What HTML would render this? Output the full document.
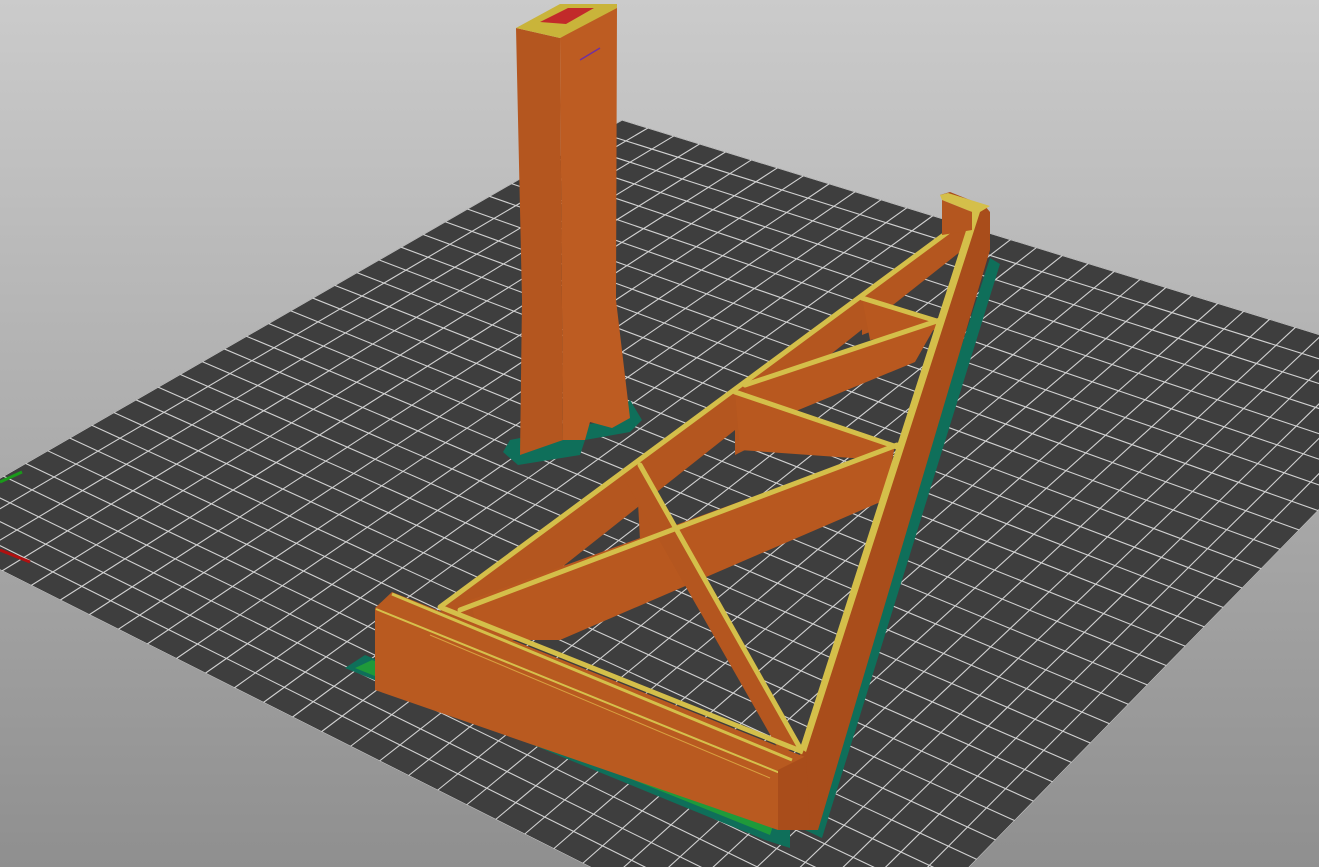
<!DOCTYPE html>
<html><head><meta charset="utf-8"><style>
html,body{margin:0;padding:0;width:1319px;height:867px;overflow:hidden;background:linear-gradient(#cbcbcb,#8f8f8f);}
svg{display:block}
</style></head><body>
<svg id="s" width="1319" height="867" viewBox="0 0 1319 867" xmlns="http://www.w3.org/2000/svg">
<defs><clipPath id="pc"><polygon points="622,120 1451,375 844,995 -85,527"/></clipPath></defs>
<polygon points="622,120 1451,375 844,995 -85,527" fill="#3e3e3e"/>
<g id="grid" clip-path="url(#pc)" stroke="#d2d2d2" stroke-width="1.1"></g>
<line x1="0" y1="482" x2="22" y2="472" stroke="#1a9a1a" stroke-width="3"/>
<line x1="0" y1="550" x2="30" y2="562" stroke="#b01010" stroke-width="3"/>
<polygon points="503,452 510,440 610,420 630,400 642,420 630,432 585,440 580,455 518,465" fill="#0f6f5a"/>
<polygon points="516,28 560,38 563,440 520,455 522,300" fill="#b4561f"/>
<polygon points="560,38 617,5 616,300 630,418 612,428 590,422 585,440 563,440" fill="#bd5c22"/>
<polygon points="516,28 560,4 617,4 617,8 560,38" fill="#c9b43a"/>
<polygon points="540,22 568,8 594,8 566,24" fill="#c22a2a"/>
<line x1="580" y1="60" x2="600" y2="48" stroke="#7030a0" stroke-width="1.5"/>
<polygon points="345,668 365,655 790,830 790,848 765,840" fill="#0f6f5a"/>
<polygon points="355,668 372,660 775,820 770,835" fill="#1f9a3a"/>
<polygon points="805,830 990,258 1000,264 822,838" fill="#0f6f5a"/>
<polygon points="440,610 975,212 975,240 470,640" fill="#b4561f"/>
<polygon points="636,465 650,470 660,535 640,540" fill="#b4561f"/>
<polygon points="735,390 745,395 745,450 735,455" fill="#b4561f"/>
<polygon points="862,298 872,298 875,330 862,335" fill="#b4561f"/>
<polygon points="470,600 895,445 885,500 560,640 480,640" fill="#b8581f"/>
<polygon points="745,385 940,318 915,362 750,430" fill="#b8581f"/>
<polygon points="735,392 895,447 880,460 740,450" fill="#b8581f"/>
<polygon points="862,298 940,322 935,330 870,340" fill="#b8581f"/>
<polygon points="640,465 800,748 780,752 625,480" fill="#b4561f"/>
<g stroke="#d4bf4a" stroke-width="5" fill="none" stroke-linecap="round">
<line x1="440" y1="607" x2="975" y2="212"/>
<line x1="460" y1="610" x2="897" y2="445"/>
<line x1="745" y1="385" x2="940" y2="320"/>
<line x1="735" y1="392" x2="897" y2="447"/>
<line x1="862" y1="298" x2="940" y2="322"/>
<line x1="640" y1="465" x2="800" y2="748"/>
</g>
<polygon points="940,195 950,192 985,206 990,212 990,250 818,830 800,830 800,752 975,214" fill="#a94d1b"/>
<polygon points="940,195 942,200 972,212 800,748 806,752 980,212 990,206 948,193" fill="#d4bf4a"/>
<polygon points="942,200 972,212 972,230 942,235" fill="#b4561f"/>
<!-- front wall -->
<polygon points="375,608 392,592 805,757 780,772" fill="#b85a20"/>
<line x1="440" y1="607" x2="803" y2="752" stroke="#d4bf4a" stroke-width="5"/>
<line x1="392" y1="594" x2="792" y2="760" stroke="#d4bf4a" stroke-width="3"/>
<polygon points="375,608 780,772 778,830 375,690" fill="#b95a20"/>
<line x1="376" y1="609" x2="780" y2="773" stroke="#d6c04c" stroke-width="2"/>
<line x1="430" y1="635" x2="770" y2="778" stroke="#d8a040" stroke-width="1"/>
<polygon points="778,770 806,756 810,830 778,830" fill="#a94d1b"/>
</svg>
<script>
var g=document.getElementById('grid');
var T=[622,120],R=[1451,375],B=[844,995],L=[-85,527],N=32;
function P(u,v){var x=T[0]*(1-u)*(1-v)+R[0]*u*(1-v)+B[0]*u*v+L[0]*(1-u)*v;var y=T[1]*(1-u)*(1-v)+R[1]*u*(1-v)+B[1]*u*v+L[1]*(1-u)*v;return [x,y];}
var h='';
for(var i=0;i<=N;i++){var t=i/N;var a=P(t,0),b=P(t,1);h+='<line x1="'+a[0]+'" y1="'+a[1]+'" x2="'+b[0]+'" y2="'+b[1]+'"/>';a=P(0,t);b=P(1,t);h+='<line x1="'+a[0]+'" y1="'+a[1]+'" x2="'+b[0]+'" y2="'+b[1]+'"/>';}
g.innerHTML=h;
</script>
</body></html>
